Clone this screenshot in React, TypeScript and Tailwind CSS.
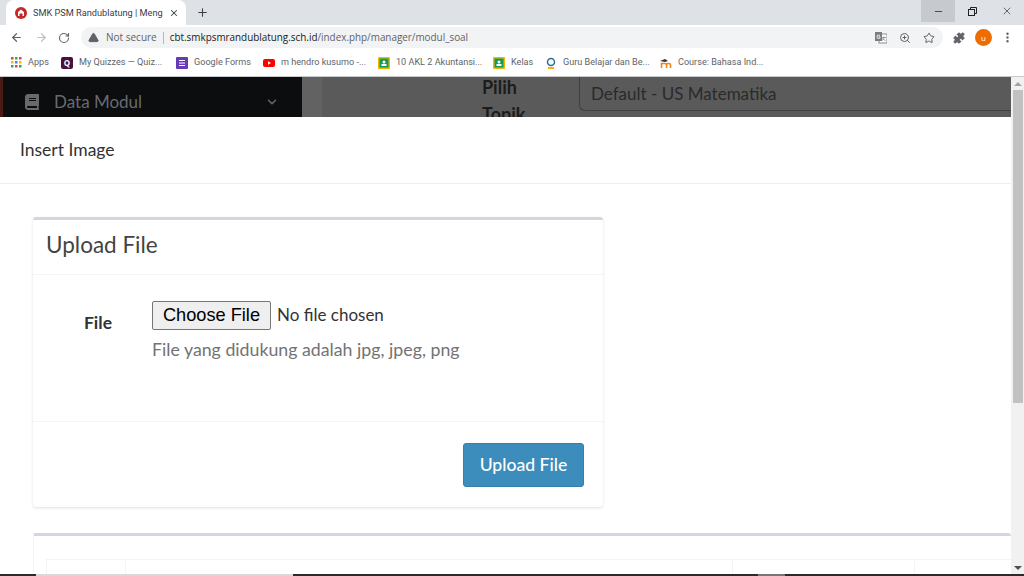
import React from 'react';
import { ArrowLeft, ArrowRight, RotateCw, Plus, X, Minus, Star, ZoomIn, Puzzle, EllipsisVertical, TriangleAlert, ChevronDown } from 'lucide-react';
import { FaBook } from 'react-icons/fa';

const uiFont = { fontFamily: '"Open Sans", "Noto Sans", sans-serif' };

const Bookmark: React.FC<{ icon: React.ReactNode; label: string; width: string }> = ({ icon, label, width }) => (
    <div className={`flex items-center gap-[6px] shrink-0 ${width}`}>
        {icon}
        <span className="text-[9.1px] text-[#5f6368] whitespace-nowrap" style={{ fontFamily: 'Roboto, sans-serif' }}>{label}</span>
    </div>
);

const Classroom = () => (
    <svg width="12" height="12" viewBox="0 0 12 12">
        <rect width="12" height="12" rx="1" fill="#f4b400" />
        <rect x="1.5" y="1.5" width="9" height="9" fill="#0f9d58" />
        <circle cx="6" cy="5" r="1.5" fill="#fff" />
        <rect x="3.5" y="7" width="5" height="2" fill="#fff" />
    </svg>
);

const App: React.FC = () => {
    return (
        <div className="h-[576px] w-[1024px] flex flex-col overflow-hidden bg-white" style={uiFont}>
            {/* tab strip */}
            <div className="h-[25px] shrink-0 bg-[#dee1e6] flex items-start">
                <div className="ml-[6px] h-[25px] w-[180px] bg-white rounded-t-lg flex items-center pl-[9px] gap-[6px]">
                    <svg width="12" height="12" viewBox="0 0 12 12" className="shrink-0">
                        <circle cx="6" cy="6" r="6" fill="#c62828" />
                        <path d="M3 9V5l3-2.500 3 2.500v4H7.500V6.500h-3V9z" fill="#fff" />
                    </svg>
                    <span className="text-[9.2px] text-[#3c4043] whitespace-nowrap overflow-hidden w-[130px]" style={{ fontFamily: 'Roboto, sans-serif' }}>SMK PSM Randublatung | Menge</span>
                    <X size={10} strokeWidth={2.5} className="text-[#3c4043] shrink-0" />
                </div>
                <Plus size={13} strokeWidth={2} className="text-[#3c4043] ml-[10px] mt-[6px]" />
                <div className="ml-auto flex">
                    <div className="w-[34px] h-[22px] bg-[#c6c9ce] flex items-center justify-center"><Minus size={11} className="text-[#3c4043]" /></div>
                    <div className="w-[35px] h-[22px] flex items-center justify-center">
                        <svg width="9" height="9" viewBox="0 0 9 9" fill="none" stroke="#202124"><rect x="0.500" y="2.500" width="6" height="6" /><path d="M2.500 2.500v-2h6v6h-2" /></svg>
                    </div>
                    <div className="w-[34px] h-[22px] flex items-center justify-center"><X size={12} strokeWidth={1.5} className="text-[#3c4043]" /></div>
                </div>
            </div>

            {/* toolbar */}
            <div className="h-[25px] shrink-0 bg-white flex items-center pl-[10px]">
                <ArrowLeft size={13} strokeWidth={2.25} className="text-[#5f6368]" />
                <ArrowRight size={13} strokeWidth={2.25} className="text-[#c0c2c5] ml-[12px]" />
                <RotateCw size={12} strokeWidth={2.25} className="text-[#5f6368] ml-[10px]" />
                <div className="ml-[11px] h-[21px] w-[862px] rounded-full bg-[#f1f3f4] flex items-center pl-[7px] pr-[8px]">
                    <TriangleAlert size={11} fill="#5f6368" stroke="#5f6368" />
                    <span className="ml-[7px] text-[10px] text-[#5f6368]">Not secure</span>
                    <div className="mx-[6px] w-px h-[12px] bg-[#b5b7ba]" />
                    <span className="text-[9.9px] text-[#202124]">cbt.smkpsmrandublatung.sch.id<span className="text-[#5f6368]">/index.php/manager/modul_soal</span></span>
                    <div className="ml-auto flex items-center gap-[12px]">
                        <svg width="12" height="12" viewBox="0 0 12 12">
                            <rect x="4" y="2" width="8" height="9" fill="#fff" stroke="#8a8d91" />
                            <rect x="0" y="0" width="7" height="9" fill="#7a7d81" />
                            <path d="M5 3.200H2.200v3H5V4.800H3.600" fill="none" stroke="#fff" strokeWidth="0.800" />
                            <path d="M7 5.500h4M9 4.500c0 2-1 3.500-2 4M7.500 6c.5 1 1.500 2 3 2.500" fill="none" stroke="#7a7d81" strokeWidth="0.700" />
                        </svg>
                        <ZoomIn size={12} className="text-[#5f6368]" />
                        <Star size={12} strokeWidth={2} className="text-[#5f6368]" />
                    </div>
                </div>
                <Puzzle size={12} fill="#5f6368" className="text-[#5f6368] ml-[10px]" />
                <div className="ml-[10px] w-[17px] h-[17px] rounded-full bg-[#ef6c00] text-white text-[8px] flex items-center justify-center">u</div>
                <EllipsisVertical size={13} strokeWidth={2.5} className="text-[#5f6368] ml-[9px]" />
            </div>

            {/* bookmarks */}
            <div className="h-[27px] shrink-0 bg-white border-b border-[#c8c9cb] flex items-center pl-[11px]">
                <Bookmark width="w-[50px]" label="Apps" icon={
                    <svg width="11" height="11" viewBox="0 0 11 11">
                        {[0, 4, 8].map((y, r) => [0, 4, 8].map((x, c) => (
                            <rect key={`${r}${c}`} x={x} y={y} width="2.500" height="2.500" fill={['#ea4335', '#fbbc04', '#34a853', '#4285f4'][(r + c * 2) % 4]} />
                        )))}
                    </svg>
                } />
                <Bookmark width="w-[115px]" label="My Quizzes — Quiz..." icon={
                    <div className="w-[12px] h-[12px] rounded-[2px] bg-[#46123c] text-white text-[8px] leading-[11px] text-center font-bold">Q</div>
                } />
                <Bookmark width="w-[87px]" label="Google Forms" icon={
                    <svg width="12" height="12" viewBox="0 0 12 12"><rect width="12" height="12" rx="1" fill="#673ab7" /><path d="M3 3.500h6M3 6h6M3 8.500h6" stroke="#fff" /></svg>
                } />
                <Bookmark width="w-[115px]" label="m hendro kusumo -..." icon={
                    <svg width="12" height="12" viewBox="0 0 12 12"><rect y="2" width="12" height="8" rx="2" fill="#f00" /><path d="M5 4.200 8 6 5 7.800z" fill="#fff" /></svg>
                } />
                <Bookmark width="w-[115px]" label="10 AKL 2 Akuntansi..." icon={<Classroom />} />
                <Bookmark width="w-[52px]" label="Kelas" icon={<Classroom />} />
                <Bookmark width="w-[115px]" label="Guru Belajar dan Be..." icon={
                    <svg width="12" height="14" viewBox="0 0 12 14" fill="none"><circle cx="6" cy="6" r="3.500" stroke="#2a6f97" strokeWidth="1.500" /><path d="M3 12h6" stroke="#f4b400" strokeWidth="2" /></svg>
                } />
                <Bookmark width="w-[115px]" label="Course: Bahasa Ind..." icon={
                    <svg width="12" height="12" viewBox="0 0 12 12" fill="none"><path d="M1.500 11V6.500h3.500a1.500 1.500 0 0 1 1.500 1.500v3M6.500 8a1.500 1.500 0 0 1 1.500-1.500h1A1.500 1.500 0 0 1 10.500 8v3" stroke="#f98012" strokeWidth="1.600" /><path d="M0 4l5-2 3 2-3 1z" fill="#333" /></svg>
                } />
            </div>

            {/* page */}
            <div className="flex-1 min-h-0 flex" style={{ fontFamily: 'Lato, "Open Sans", sans-serif' }}>
                <div className="flex-1 min-w-0 flex flex-col">
                    {/* dimmed page behind the modal */}
                    <div className="h-[40px] shrink-0 flex overflow-hidden bg-[#5a5a5a]">
                        <div className="w-[302px] shrink-0 bg-[#0b0d0f] flex items-center pl-[21px] pr-[23px] pt-[10px] border-l-[3px] border-[#4a1a14]">
                            <FaBook size={16} className="text-[#6a6a6a]" />
                            <span className="ml-[14px] text-[17px] text-[#676b6f]">Data Modul</span>
                            <ChevronDown size={14} strokeWidth={2.5} className="ml-auto text-[#676b6f]" />
                        </div>
                        <div className="w-[20px] shrink-0 bg-[#626262]" />
                        <div className="w-[158px] shrink-0 pl-[160px] relative">
                            <div className="absolute left-[160px] top-[-3px] text-[18px] leading-[27px] font-bold text-[#1c1c1c] whitespace-nowrap">Pilih<br />Topik</div>
                        </div>
                        <div className="ml-[97px] flex-1 h-[34px] border-l border-b border-t-0 border-[#3f3f3f] rounded-bl-md pl-[11px] text-[17px] leading-[34px] text-[#2a2a2a]">Default - US Matematika</div>
                    </div>

                    {/* modal */}
                    <div className="h-[67px] shrink-0 border-b border-[#eeeeee] flex items-center pl-[20px] text-[#333] text-[17.500px]">Insert Image</div>
                    <div className="flex-1 min-h-0 bg-white pl-[33px] pt-[33px] overflow-hidden">
                        <div className="w-[570px] h-[290px] border-t-[3px] border-[#d2d6de] rounded-[3px] shadow-[0_1px_3px_rgba(0,0,0,0.13)] flex flex-col">
                            <div className="h-[55px] shrink-0 border-b border-[#f4f4f4] pl-[13px] flex items-center text-[22.500px] text-[#444] pb-[5px]">Upload File</div>
                            <div className="h-[147px] shrink-0 border-b border-[#f4f4f4] flex pt-[26px]">
                                <div className="w-[79px] shrink-0 text-right text-[17.500px] font-bold text-[#333] pt-[11px] leading-[22px]">File</div>
                                <div className="ml-[40px]">
                                    <div className="flex items-center">
                                        <button className="h-[29px] w-[119px] bg-[#efefef] border border-[#767676] rounded-[2px] text-[18.200px] text-black" style={{ fontFamily: '"Liberation Sans", Arial, sans-serif' }}>Choose File</button>
                                        <span className="ml-[6px] text-[17px] text-[#333] pb-[2px]">No file chosen</span>
                                    </div>
                                    <div className="mt-[7px] text-[17.750px] leading-[24px] text-[#737373]">File yang didukung adalah jpg, jpeg, png</div>
                                </div>
                            </div>
                            <div className="flex-1 flex justify-end items-start pt-[21px] pr-[19px]">
                                <button className="w-[121px] h-[44px] bg-[#3c8dbc] border border-[#367fa9] rounded-[3px] text-white text-[17.600px] font-medium">Upload File</button>
                            </div>
                        </div>
                        <div className="mt-[26px] h-[60px] border-t-[3px] border-l border-[#d2d6de] border-l-[#f4f4f4] rounded-t-[3px] pt-[23px] pl-[12px]">
                            <div className="h-[20px] flex border-t border-l border-[#f4f4f4]">
                                <div className="w-[79px] border-r border-[#f4f4f4] flex justify-end pr-[14px] pt-[12px] overflow-hidden"><span className="text-[14px] leading-[6px] font-bold text-[#888]">..</span></div>
                                <div className="w-[607px] border-r border-[#f4f4f4]" />
                                <div className="w-[182px] border-r border-[#f4f4f4]" />
                            </div>
                        </div>
                    </div>
                </div>

                {/* scrollbar */}
                <div className="w-[13px] shrink-0 bg-[#f1f1f1] flex flex-col items-center">
                    <div className="h-[13px] shrink-0 flex items-center justify-center"><div className="border-x-[4px] border-x-transparent border-b-[4px] border-b-[#a3a3a3]" /></div>
                    <div className="w-[10px] ml-[1px] h-[313px] bg-[#c1c1c1]" />
                    <div className="mt-auto h-[13px] shrink-0 flex items-center justify-center"><div className="border-x-[4px] border-x-transparent border-t-[4px] border-t-[#505050]" /></div>
                </div>
            </div>

            {/* edge of the taskbar */}
            <div className="h-[2px] shrink-0 bg-[#2b2b2b] flex">
                <div className="ml-[36px] w-[257px] bg-[#d9d9d9]" />
                <div className="ml-[465px] w-[27px] bg-[#777]" />
            </div>
        </div>
    );
};

export default App;
